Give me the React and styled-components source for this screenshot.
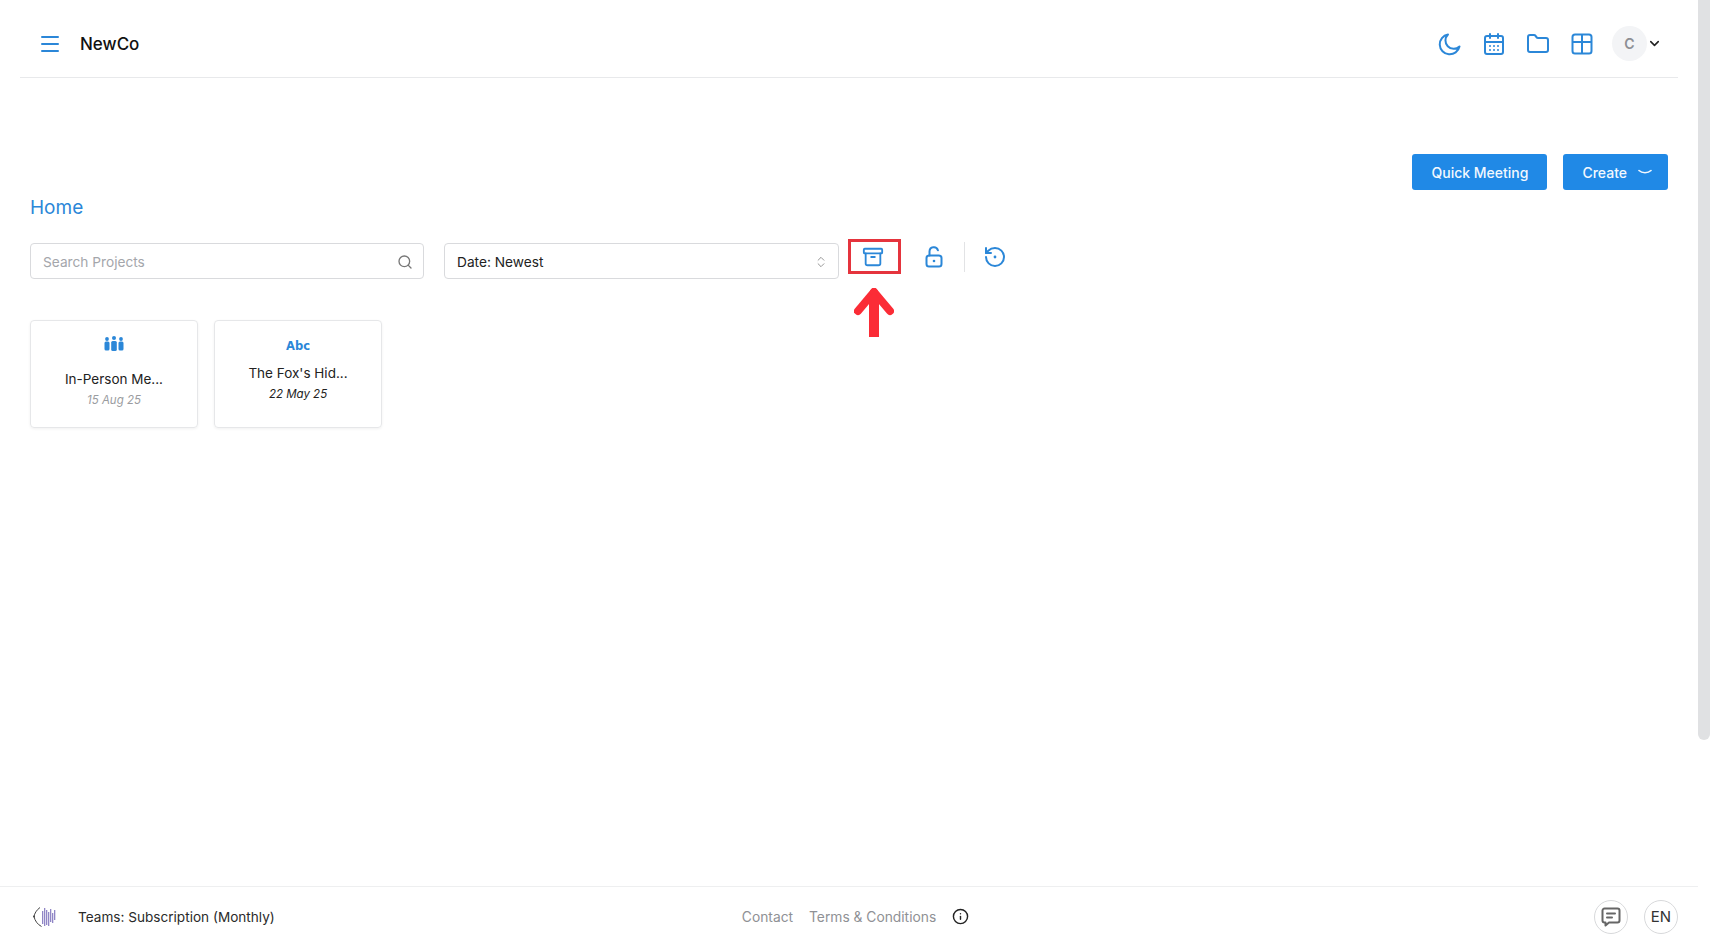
import React from "react";
import styled, { createGlobalStyle } from "styled-components";
import {
  Menu,
  CalendarDays,
  Folder,
  ChevronDown,
  Search,
  ChevronsUpDown,
  Archive,
  Info,
} from "lucide-react";

const BLUE = "#2b87d8";

const GlobalStyle = createGlobalStyle`
  html, body {
    margin: 0;
    padding: 0;
    height: 100%;
    overflow: hidden;
    background: #fff;
    font-family: Inter, "Liberation Sans", sans-serif;
  }
  * { box-sizing: border-box; }
`;

const Shell = styled.div`
  display: flex;
  width: 1710px;
  height: 945px;
`;

const Page = styled.div`
  flex: 1;
  min-width: 0;
  display: flex;
  flex-direction: column;
`;

const ScrollTrack = styled.div`
  width: 12px;
  flex-shrink: 0;
`;

const ScrollThumb = styled.div`
  height: 740px;
  background: #e0e1e3;
  border-radius: 0 0 6px 6px;
`;

const Header = styled.header`
  height: 78px;
  margin: 0 20px;
  padding: 10px 16px 0 18px;
  display: flex;
  align-items: center;
  justify-content: space-between;
  border-bottom: 1px solid #e8e9eb;
  flex-shrink: 0;
`;

const Brand = styled.div`
  display: flex;
  align-items: center;
  gap: 18px;
`;

const BrandName = styled.span`
  font-size: 17px;
  font-weight: 500;
  color: #111;
`;

const HeaderIcons = styled.div`
  display: flex;
  align-items: center;
  gap: 20px;
  color: ${BLUE};
`;

const AvatarWrap = styled.div`
  display: flex;
  align-items: center;
  margin-left: -2px;
  color: #222;
`;

const Avatar = styled.div`
  width: 35px;
  height: 35px;
  border-radius: 50%;
  background: #f3f4f6;
  color: #8d8f94;
  font-size: 14px;
  font-weight: 600;
  display: flex;
  align-items: center;
  justify-content: center;
`;

const Main = styled.main`
  flex: 1;
  min-height: 0;
  padding: 76px 30px 0;
`;

const Actions = styled.div`
  display: flex;
  justify-content: flex-end;
  gap: 16px;
`;

const Button = styled.button`
  height: 36px;
  padding: 0 ${(p) => p.$padRight}px 0 19px;
  border: none;
  border-radius: 3px;
  background: #2089e6;
  color: #f2f8fe;
  font-family: inherit;
  font-size: 14px;
  font-weight: 500;
  display: flex;
  align-items: center;
  gap: 11px;
`;

const Title = styled.h1`
  margin: 6px 0 0;
  font-size: 19px;
  line-height: 24px;
  font-weight: 400;
  color: ${BLUE};
`;

const Toolbar = styled.div`
  display: flex;
  align-items: flex-start;
  margin-top: 19px;
`;

const Field = styled.div`
  width: ${(p) => p.$width}px;
  height: 36px;
  margin: 4px ${(p) => p.$after}px 0 0;
  padding: 1px 10px 0 12px;
  border: 1px solid #d9dadd;
  border-radius: 4px;
  display: flex;
  align-items: center;
  justify-content: space-between;
  font-size: 13.7px;
  color: ${(p) => (p.$muted ? "#a4a6ab" : "#222")};
`;

const ToolIcons = styled.div`
  position: relative;
  display: flex;
  align-items: center;
  height: 35px;
  color: ${BLUE};
`;

const Highlight = styled.div`
  width: 53px;
  height: 35px;
  padding: 1px 3px 0 0;
  border: 3px solid #e5343d;
  display: flex;
  align-items: center;
  justify-content: center;
`;

const Tool = styled.div`
  margin-left: ${(p) => p.$left}px;
  display: flex;
`;

const Divider = styled.div`
  width: 1px;
  height: 30px;
  margin-left: 18px;
  background: #e2e3e5;
`;

const PointerArrow = styled.svg`
  position: absolute;
  left: 6px;
  top: 49px;
`;

const Cards = styled.div`
  display: flex;
  gap: 16px;
  margin-top: 41px;
`;

const Card = styled.div`
  width: 168px;
  height: 108px;
  padding-top: ${(p) => p.$top}px;
  border: 1px solid #e6e7e9;
  border-radius: 4px;
  box-shadow: 0 1px 3px rgba(0, 0, 0, 0.06);
  display: flex;
  flex-direction: column;
  align-items: center;
`;

const CardIcon = styled.div`
  height: ${(p) => p.$height}px;
  color: ${BLUE};
  display: flex;
  align-items: center;
`;

const AbcMark = styled.span`
  font-family: "DejaVu Sans", sans-serif;
  font-size: 11.5px;
  line-height: 13px;
  font-weight: 700;
  color: ${BLUE};
`;

const CardTitle = styled.div`
  margin-top: ${(p) => p.$gap}px;
  font-size: 13.5px;
  line-height: 18px;
  color: #222;
`;

const CardDate = styled.div`
  margin-top: 5px;
  font-size: 11.5px;
  line-height: 15px;
  font-style: italic;
  color: ${(p) => (p.$dim ? "#9a9ca0" : "#222")};
`;

const Footer = styled.footer`
  height: 59px;
  flex-shrink: 0;
  padding: 1px 20px 0 33px;
  border-top: 1px solid #eeeff0;
  display: grid;
  grid-template-columns: 1fr auto 1fr;
  align-items: center;
`;

const Plan = styled.div`
  display: flex;
  align-items: center;
  gap: 21px;
  font-size: 13.6px;
  color: #2a2a2a;
`;

const FooterLinks = styled.nav`
  display: flex;
  align-items: center;
  gap: 16px;
  font-size: 13.8px;
  color: #8f9195;
`;

const InfoIcon = styled.span`
  display: flex;
  color: #222;
`;

const RoundGroup = styled.div`
  display: flex;
  justify-content: flex-end;
  gap: 16px;
`;

const RoundButton = styled.div`
  width: 34px;
  height: 34px;
  border: 1px solid #d8d9db;
  border-radius: 50%;
  display: flex;
  align-items: center;
  justify-content: center;
  font-size: 15px;
  color: #333;
`;

function MoonIcon() {
  return (
    <svg width="24" height="24" viewBox="0 0 24 24" fill="none" stroke="currentColor" strokeWidth="2" strokeLinecap="round" strokeLinejoin="round">
      <path d="M10 2.5a8 8 0 0 0 11.5 12A10 10 0 1 1 10 2.5Z" />
    </svg>
  );
}

function TableIcon() {
  return (
    <svg width="24" height="24" viewBox="0 0 24 24" fill="none" stroke="currentColor" strokeWidth="2" strokeLinejoin="round">
      <rect x="2.5" y="2.5" width="19" height="19" rx="2.5" />
      <path d="M2.5 10h19M12 2.5v19" />
    </svg>
  );
}

function OpenLockIcon() {
  return (
    <svg width="24" height="24" viewBox="0 0 24 24" fill="none" stroke="currentColor" strokeWidth="2" strokeLinecap="round" strokeLinejoin="round">
      <rect x="4.5" y="10.500" width="15" height="11" rx="2.5" />
      <path d="M7.5 10.500V6.500a4.300 4.300 0 0 1 8.400-1.200" />
      <circle cx="12" cy="16" r="1.3" fill="currentColor" stroke="none" />
    </svg>
  );
}

function HistoryDot() {
  return (
    <svg width="24" height="24" viewBox="0 0 24 24" fill="none" stroke="currentColor" strokeWidth="2" strokeLinecap="round" strokeLinejoin="round">
      <path d="M3 12a9 9 0 1 0 9-9 9.75 9.75 0 0 0-6.74 2.74L3 8" />
      <path d="M3 3v5h5" />
      <circle cx="12" cy="12" r="1.4" fill="currentColor" stroke="none" />
    </svg>
  );
}

function PeopleIcon() {
  return (
    <svg width="20" height="15" viewBox="0 0 20 15" fill="currentColor">
      <circle cx="3" cy="3" r="1.9" />
      <circle cx="10" cy="2" r="2" />
      <circle cx="17" cy="3" r="1.9" />
      <rect x="0.5" y="5.5" width="5" height="9" rx="1.5" />
      <rect x="7.2" y="5" width="5.6" height="10" rx="1.5" />
      <rect x="14.5" y="5.5" width="5" height="9" rx="1.5" />
    </svg>
  );
}

function ChatIcon() {
  return (
    <svg width="22" height="22" viewBox="0 0 22 22" fill="none" stroke="#666" strokeWidth="2" strokeLinecap="round" strokeLinejoin="round">
      <path d="M4.5 2.5h13a2 2 0 0 1 2 2v10a2 2 0 0 1-2 2H9l-3.5 3v-3h-1a2 2 0 0 1-2-2v-10a2 2 0 0 1 2-2Z" />
      <path d="M7 7.5h8M7 11.5h5" />
    </svg>
  );
}

function BrandLogo() {
  const bars = [
    [9, 5, 13],
    [11, 2, 18],
    [13, 4, 15],
    [15, 6, 14],
    [17, 3, 13],
    [19, 7, 10],
    [21, 4, 10],
  ];
  return (
    <svg width="24" height="22" viewBox="0 0 24 22" fill="none">
      <path d="M7 1.500C3.500 4 1.500 7.500 1 10.500c.8 4 3.500 8 7.500 10" stroke="#444" strokeWidth="1" />
      <circle cx="1" cy="10.500" r="1" fill="#444" />
      {bars.map(([x, y, h]) => (
        <rect key={x} x={x} y={y} width="1.3" height={h} fill="#7468b8" opacity="0.8" />
      ))}
    </svg>
  );
}

export default function App() {
  return (
    <Shell>
      <GlobalStyle />
      <Page>
        <Header>
          <Brand>
            <Menu size={24} color={BLUE} strokeWidth={2} />
            <BrandName>NewCo</BrandName>
          </Brand>
          <HeaderIcons>
            <MoonIcon />
            <CalendarDays size={24} strokeWidth={2} />
            <Folder size={24} strokeWidth={2} />
            <TableIcon />
            <AvatarWrap>
              <Avatar>C</Avatar>
              <ChevronDown size={15} strokeWidth={2.5} />
            </AvatarWrap>
          </HeaderIcons>
        </Header>

        <Main>
          <Actions>
            <Button $padRight={19}>Quick Meeting</Button>
            <Button $padRight={16}>
              Create
              <svg width="14" height="6" viewBox="0 0 14 6" fill="none" stroke="currentColor" strokeWidth="1.6" strokeLinecap="round">
                <path d="M1 1.5c3 3 9 3 12 0" />
              </svg>
            </Button>
          </Actions>

          <Title>Home</Title>

          <Toolbar>
            <Field $width={394} $after={20} $muted>
              Search Projects
              <Search size={16} color="#777" strokeWidth={2} />
            </Field>
            <Field $width={395} $after={9}>
              Date: Newest
              <ChevronsUpDown size={14} color="#888" strokeWidth={1.5} />
            </Field>
            <ToolIcons>
              <Highlight>
                <Archive size={22} strokeWidth={2} />
              </Highlight>
              <Tool $left={21}>
                <OpenLockIcon />
              </Tool>
              <Divider />
              <Tool $left={18}>
                <HistoryDot />
              </Tool>
              <PointerArrow width="40" height="50" viewBox="0 0 40 50">
                <path d="M20 4L4 23" stroke="#fb2c36" strokeWidth="8" strokeLinecap="round" fill="none" />
                <path d="M20 4l16 19" stroke="#fb2c36" strokeWidth="8" strokeLinecap="round" fill="none" />
                <path d="M15 10l5-6 5 6v39H15z" fill="#fb2c36" />
              </PointerArrow>
            </ToolIcons>
          </Toolbar>

          <Cards>
            <Card $top={15}>
              <CardIcon $height={15}>
                <PeopleIcon />
              </CardIcon>
              <CardTitle $gap={19}>In-Person Me...</CardTitle>
              <CardDate $dim>15 Aug 25</CardDate>
            </Card>
            <Card $top={19}>
              <CardIcon $height={13}>
                <AbcMark>Abc</AbcMark>
              </CardIcon>
              <CardTitle $gap={11}>The Fox's Hid...</CardTitle>
              <CardDate>22 May 25</CardDate>
            </Card>
          </Cards>
        </Main>

        <Footer>
          <Plan>
            <BrandLogo />
            Teams: Subscription (Monthly)
          </Plan>
          <FooterLinks>
            <span>Contact</span>
            <span>Terms &amp; Conditions</span>
            <InfoIcon>
              <Info size={17} strokeWidth={2} />
            </InfoIcon>
          </FooterLinks>
          <RoundGroup>
            <RoundButton>
              <ChatIcon />
            </RoundButton>
            <RoundButton>EN</RoundButton>
          </RoundGroup>
        </Footer>
      </Page>
      <ScrollTrack>
        <ScrollThumb />
      </ScrollTrack>
    </Shell>
  );
}
